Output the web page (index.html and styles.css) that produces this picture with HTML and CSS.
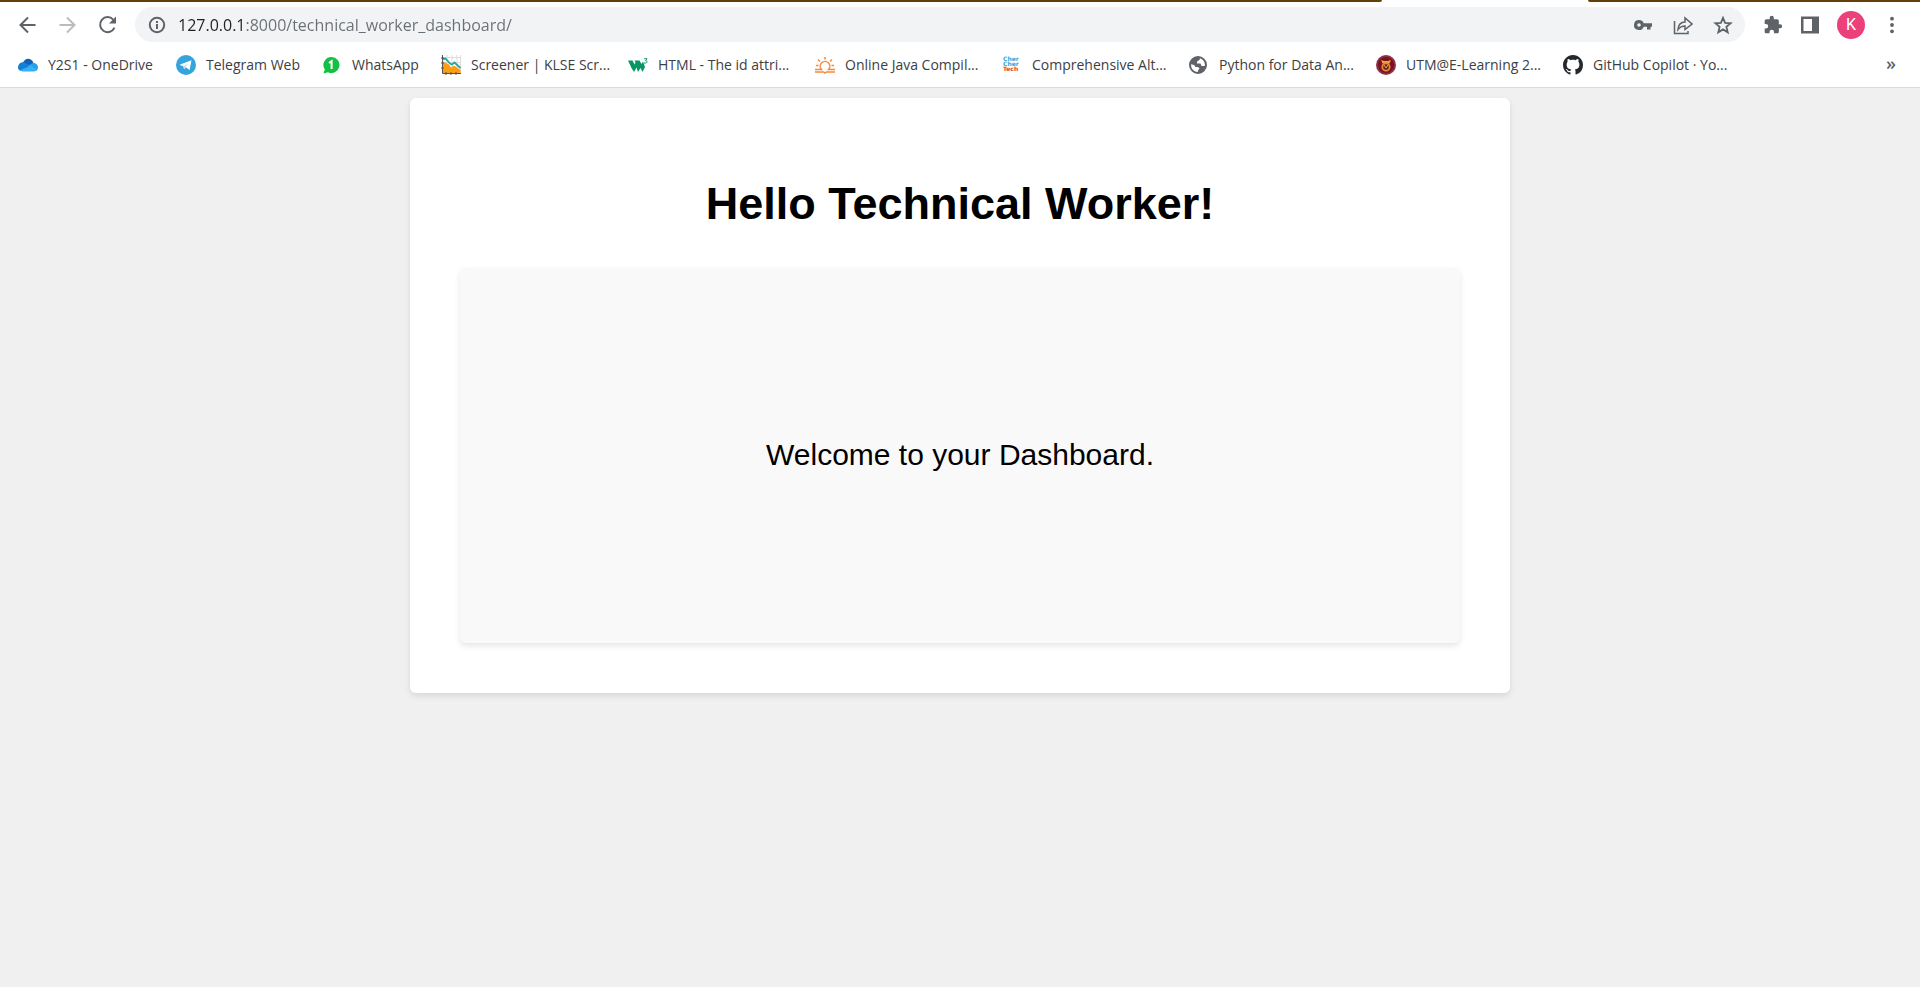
FILE: index.html
```html
<!DOCTYPE html>
<html lang="en">
<head>
<meta charset="utf-8">
<title>Technical Worker Dashboard</title>
<link rel="stylesheet" href="styles.css">
</head>
<body>
<header class="browser">
  <div class="tabstrip"><span class="tabs-left"></span><span class="tabs-right"></span></div>
  <div class="toolbar">
    <nav class="nav" aria-label="Navigation">
      <button class="icon-btn" aria-label="Back"><svg viewBox="0 0 20 20" fill="none" stroke="#5f6368" stroke-width="2"><path d="M18.500 10H3.500M11 2.500L3.500 10L11 17.500"/></svg></button>
      <button class="icon-btn" aria-label="Forward"><svg viewBox="0 0 20 20" fill="none" stroke="#babcbe" stroke-width="2"><path d="M2.500 10H17.500M10 2.500L17.500 10L10 17.500"/></svg></button>
      <button class="icon-btn" aria-label="Reload"><svg viewBox="0 0 20 20"><path d="M16.200 4.600A7.500 7.500 0 1 0 17.500 12.600" fill="none" stroke="#5f6368" stroke-width="2"/><path d="M19 1.500V8.500H12Z" fill="#5f6368"/></svg></button>
    </nav>
    <div class="omnibox">
      <button class="icon-btn info" aria-label="Site information"><svg viewBox="0 0 18 18" fill="none" stroke="#5f6368" stroke-width="2"><circle cx="9" cy="9" r="7.200"/><path d="M9 8V13M9 5V7"/></svg></button>
      <input class="url" type="text" aria-label="Address" value="127.0.0.1:8000/technical_worker_dashboard/">
      <div class="actions">
        <button class="icon-btn" aria-label="Passwords"><svg viewBox="0 0 20 20"><path fill="#5f6368" fill-rule="evenodd" d="M6 5a5 5 0 1 0 4.700 6.700H14V14.500H17.500V11.700H19V8.300H10.700A5 5 0 0 0 6 5ZM6 8.200a1.800 1.800 0 1 1 0 3.600a1.800 1.800 0 0 1 0-3.600Z"/></svg></button>
        <button class="icon-btn" aria-label="Share"><svg viewBox="0 0 20 20" fill="none" stroke="#5f6368" stroke-width="1.500"><path d="M1.500 6V18.500H15V16M5 14.500C5.500 9.500 8 7 12 7V3L19 9L12 14.500V11C9 11 7 12 5 14.500Z"/></svg></button>
        <button class="icon-btn" aria-label="Bookmark this page"><svg viewBox="0 0 20 20" fill="none" stroke="#5f6368" stroke-width="1.800"><path d="M10 2.800L12.100 7.900L17.600 8.300L13.400 11.900L14.700 17.300L10 14.400L5.300 17.300L6.600 11.900L2.400 8.300L7.900 7.900Z"/></svg></button>
      </div>
    </div>
    <div class="tools">
      <button class="icon-btn" aria-label="Extensions"><svg viewBox="0 0 24 24" fill="#5f6368"><path d="M20.500 11H19V7c0-1.100-.9-2-2-2h-4V3.500a2.500 2.500 0 0 0-5 0V5H4c-1.100 0-1.990.9-1.990 2v3.800H3.500a2.700 2.700 0 0 1 0 5.400H2V20c0 1.100.9 2 2 2h3.800v-1.500a2.700 2.700 0 0 1 5.400 0V22H17c1.100 0 2-.9 2-2v-4h1.500a2.500 2.500 0 0 0 0-5Z"/></svg></button>
      <button class="icon-btn" aria-label="Side panel"><svg viewBox="0 0 20 20"><path fill="#5f6368" fill-rule="evenodd" d="M1 1.500H19V18.500H1ZM3.500 4V16H12V4Z"/></svg></button>
      <button class="avatar" aria-label="Profile">K</button>
      <button class="icon-btn" aria-label="Menu"><svg viewBox="0 0 20 20" fill="#5f6368"><circle cx="10" cy="3.700" r="1.900"/><circle cx="10" cy="10" r="1.900"/><circle cx="10" cy="16.300" r="1.900"/></svg></button>
    </div>
  </div>
  <nav class="bookmarks" aria-label="Bookmarks">
    <a href="#"><svg viewBox="0 0 20 20"><path fill="#0f62b8" d="M5 8C6 3.500 13 1.500 15.500 8L11 12Z"/><path fill="#1380d8" d="M0 12.500C0 9 3 6.500 6.500 7.500L13 11L8 16H4C1.500 16 0 14.500 0 12.500Z"/><path fill="#2a9ee8" d="M11 10L15 8C18 8 20 10 20 12.500C20 15 18 16 16.500 16H8Z"/><path fill="#35b0f2" d="M2 15.300L13 10.500L19.300 14.700C18.500 16 17 16.400 16 16.400H4.500C3.500 16.400 2.600 16 2 15.300Z"/></svg><span>Y2S1 - OneDrive</span></a>
    <a href="#"><svg viewBox="0 0 20 20"><circle cx="10" cy="10" r="10" fill="#34a4dc"/><path fill="#fff" d="M3.500 9.800L15.500 5.200L13.600 15L9.800 12.300L8 14.200L7.500 11.500Z"/><path d="M7.700 11.500L13 7.500L9 12.200L8 14Z" fill="#b8d9ea"/></svg><span>Telegram Web</span></a>
    <a href="#"><svg viewBox="0 0 20 20"><path fill="#12c143" d="M9.500 2A8 8 0 1 1 6 17.200L1.500 18.500L2.800 14.500A8 8 0 0 1 9.500 2Z"/><path d="M7 8L9.600 6.200V14" fill="none" stroke="#fff" stroke-width="2"/></svg><span>WhatsApp</span></a>
    <a href="#"><svg viewBox="0 0 20 20"><path d="M1 2.500H20M1 7.500H20M6 0V18M11 0V18M16 0V18M19.500 0V18" stroke="#ddd"/><path fill="#ff9d12" d="M2 6.500L5 8L8 9.500L10 12.500L13 10.500L16 12.500L19.500 15V18H2Z"/><path d="M2 4L4.500 3.500L9 8.500L11 9.500L13.500 7.500L19.500 13" fill="none" stroke="#20a99b" stroke-width="1.800"/><path d="M1.500 0V18.500H20" fill="none" stroke="#555"/><path d="M0 3H3M0 8H3M0 13H3M5 17V20M10 17V20M15 17V20" stroke="#555"/></svg><span>Screener | KLSE Scr...</span></a>
    <a href="#"><svg viewBox="0 0 20 20"><path fill="#059862" d="M0 5.500H4.500L6.500 9.500L7.500 7.500L6.500 5.500H11.500L13.500 9L15 6.500L17 12L14.500 17L12.500 13L10 17L8.500 12.500L6 17L3.500 13Z"/><path d="M16.200 3.700H19L17.500 5.600C20 5.600 19.500 8.800 16 8" fill="none" stroke="#059862"/></svg><span>HTML - The id attri...</span></a>
    <a href="#"><svg viewBox="0 0 20 20" fill="none" stroke="#f58a3c" stroke-width="1.500"><path d="M0 14.500H6.500A4.800 4.800 0 1 1 13.500 14.500H20M0 17H8.500L10 18L11.500 17H20M10 2V4.500M3 4.500L5 6.500M17 4.500L15 6.500M1 10.500H3.500M16.500 10.500H19"/></svg><span>Online Java Compil...</span></a>
    <a href="#"><svg class="cher" viewBox="0 0 20 20"><text x="1" y="6">Cher</text><text x="1" y="11">Cher</text><text class="red" x="1" y="16">Tech</text></svg><span>Comprehensive Alt...</span></a>
    <a href="#"><svg viewBox="0 0 20 20"><circle cx="9" cy="10" r="8" fill="#fff" stroke="#5f6368" stroke-width="2"/><path fill="#5f6368" d="M3 4L9 1.500L11 3.500L10.500 5.500L8 6.500V8.500H11.500L12.500 11H15L17 10.500L14 16.500L9 18V15.500L10.500 13.500L9 12H6.500L5 10L1.500 9Z"/><path fill="#fff" d="M9.500 5.500L12 4V6L15 7.500V9L13 9.500L11.500 7.500H8.500ZM3 10H5L6.500 12.500H9L9.500 13.500L7.500 15V16.500C4.500 15.500 3 13 3 10Z"/></svg><span>Python for Data An...</span></a>
    <a href="#"><svg viewBox="0 0 20 20"><circle cx="10" cy="10" r="10" fill="#8d3040"/><circle cx="10" cy="10" r="8" fill="#7a1026"/><path d="M5 5L8 6H12L15 5L13.500 8.500H6.500Z" fill="#efa537"/><circle cx="10" cy="12" r="3.700" fill="none" stroke="#d9912b" stroke-width="1.800"/><path d="M8 10L10 13L12 10" fill="none" stroke="#efb537"/></svg><span>UTM@E-Learning 2...</span></a>
    <a href="#"><svg viewBox="0 0 16 16"><path fill="#24292f" d="M8 0C3.580 0 0 3.580 0 8c0 3.540 2.290 6.530 5.470 7.590.4.070.55-.17.55-.38 0-.19-.01-.82-.01-1.490-2.010.37-2.530-.49-2.690-.94-.09-.23-.48-.94-.82-1.130-.28-.15-.68-.52-.01-.53.63-.01 1.080.58 1.230.82.72 1.210 1.870.87 2.330.66.07-.52.28-.87.51-1.070-1.780-.2-3.640-.89-3.640-3.950 0-.87.31-1.590.82-2.150-.08-.2-.36-1.020.08-2.120 0 0 .67-.21 2.200.82.64-.18 1.320-.27 2-.27s1.360.09 2 .27c1.530-1.040 2.200-.82 2.200-.82.44 1.100.16 1.920.08 2.120.51.56.82 1.270.82 2.150 0 3.070-1.870 3.750-3.650 3.950.29.25.54.73.54 1.480 0 1.070-.01 1.930-.01 2.200 0 .21.15.46.55.38A8 8 0 0 0 16 8c0-4.420-3.580-8-8-8Z"/></svg><span>GitHub Copilot · Yo...</span></a>
    <button class="more" aria-label="More bookmarks">»</button>
  </nav>
</header>
<main class="card">
  <h1>Hello Technical Worker!</h1>
  <section class="panel"><p>Welcome to your Dashboard.</p></section>
</main>
</body>
</html>
```
FILE: styles.css
```css
* { box-sizing: border-box; }
body {
  margin: 0;
  min-height: 100vh;
  background: #f0f0f0;
  color: #000;
  font-family: "Liberation Sans", Arial, sans-serif;
}
button {
  border: 0;
  padding: 0;
  background: none;
  font: inherit;
}
svg { display: block; width: 20px; height: 20px; }
.browser {
  background: #fff;
  border-bottom: 1px solid #dadce0;
  font-family: "Open Sans", "Noto Sans", sans-serif;
}
.tabstrip { display: flex; height: 2px; }
.tabs-left, .tabs-right { background: #643f0b; }
.tabs-left { width: 72%; border-bottom-right-radius: 4px; }
.tabs-right { flex: 1; margin-left: 206px; border-bottom-left-radius: 4px; }
.toolbar {
  display: flex;
  align-items: center;
  padding: 5px 18px 0 17px;
}
.nav { display: flex; gap: 20px; margin-right: 18px; }
.omnibox {
  display: flex;
  flex: 1;
  align-items: center;
  height: 35px;
  padding: 0 12px;
  border-radius: 18px;
  background: #f1f3f4;
}
.info svg { width: 18px; height: 18px; }
.info { margin-left: 1px; }
.url {
  flex: 1;
  height: 30px;
  margin-left: 12px;
  padding: 0;
  border: 0;
  font: 16px "Open Sans", "Noto Sans", sans-serif;
  color: transparent;
  background: linear-gradient(90deg, #202124 68px, #6b6f74 68px);
  background-clip: text;
  -webkit-background-clip: text;
}
.actions { display: flex; gap: 20px; }
.tools { display: flex; align-items: center; gap: 17px; margin-left: 18px; }
.avatar {
  width: 28px;
  height: 28px;
  border-radius: 50%;
  background: #ec407a;
  color: #fff;
  font: 16px Roboto, sans-serif;
}
.bookmarks {
  display: grid;
  grid-template-columns: 158px 146px 119px repeat(7, 187px) 1fr;
  align-items: center;
  height: 45px;
  padding: 0 24px 0 18px;
}
.bookmarks a {
  display: flex;
  align-items: center;
  gap: 10px;
  color: #3c4043;
  font-size: 14px;
  text-decoration: none;
  white-space: nowrap;
}
.cher text { font: bold 6px "DejaVu Sans", sans-serif; fill: #2aa9dc; }
.cher .red { fill: #e8432e; }
.more {
  justify-self: end;
  padding-bottom: 4px;
  color: #5f6368;
  font-size: 18px;
  font-weight: 600;
}
.card {
  width: 1100px;
  max-width: 100%;
  margin: 10px auto;
  padding: 50px;
  border-radius: 6px;
  background: #fff;
  box-shadow: 0 3px 6px rgba(0, 0, 0, 0.1);
}
h1 {
  margin: 30px 0 38px;
  font-size: 45px;
  line-height: 52px;
  text-align: center;
}
.panel {
  display: grid;
  place-items: center;
  min-height: 375px;
  padding-bottom: 2px;
  border-radius: 6px;
  background: #f9f9f9;
  box-shadow: 0 3px 6px rgba(0, 0, 0, 0.1);
}
.panel p { margin: 0; font-size: 30px; }
```
